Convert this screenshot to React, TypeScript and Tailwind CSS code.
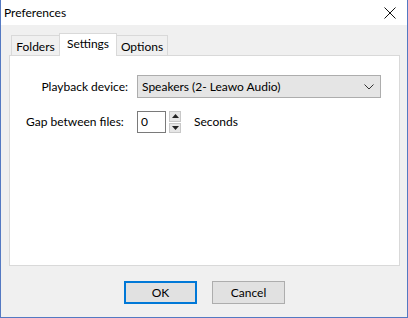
const font = { fontFamily: 'Lato, "Noto Sans", sans-serif' }

function Tab({ label, width, active }: { label: string; width: string; active?: boolean }) {
    if (active) {
        return (
            <div className={`relative z-10 -mb-px h-[23px] border border-b-0 border-[#d9d9d9] bg-white text-center leading-[20px] ${width}`}>
                {label}
            </div>
        )
    }
    return (
        <div className={`h-[20px] border border-b-0 border-[#d9d9d9] bg-[#f0f0f0] pt-px text-center leading-[19px] ${width}`}>
            {label}
        </div>
    )
}

function Spinner() {
    return (
        <div className="ml-[3px] flex h-[22px] w-[12px] flex-col gap-px">
            <div className="flex h-[11px] items-center justify-center border border-[#c8c8c8] bg-[#e6e6e6]">
                <svg width="7" height="4" viewBox="0 0 7 4"><path d="M3.5 0 L7 4 L0 4 Z" fill="#222" /></svg>
            </div>
            <div className="flex h-[11px] items-center justify-center border border-[#c8c8c8] bg-[#e6e6e6]">
                <svg width="7" height="4" viewBox="0 0 7 4"><path d="M0 0 L7 0 L3.5 4 Z" fill="#222" /></svg>
            </div>
        </div>
    )
}

export default function App() {
    return (
        <div
            className="flex h-[318px] w-[408px] flex-col border-x border-b border-[#5479c2] bg-[#f0f0f0] text-[12px] text-black"
            style={font}
        >
            <div className="flex h-[25px] shrink-0 items-center justify-between bg-white pl-[3px] pr-[11px]">
                <span className="text-[12px]">Preferences</span>
                <svg width="12" height="12" viewBox="0 0 12 12">
                    <path d="M0.5 0.5 L11.5 11.5 M11.5 0.5 L0.5 11.5" stroke="#111" strokeWidth="1" />
                </svg>
            </div>

            <div className="ml-[8px] mr-[7px] mt-[8px] flex flex-col">
                <div className="flex items-end pl-[2px]">
                    <Tab label="Folders" width="w-[49px]" />
                    <div className="-ml-px">
                        <Tab label="Settings" width="w-[58px]" active />
                    </div>
                    <div className="-ml-px">
                        <Tab label="Options" width="w-[52px]" />
                    </div>
                </div>
                <div className="h-[211px] border border-[#d9d9d9] bg-white">
                    <div className="mt-[19px] flex items-center">
                        <span className="w-[127px] pr-[9px] text-right">Playback device:</span>
                        <div className="flex h-[23px] w-[244px] items-center justify-between border border-[#adadad] bg-[#e5e5e5] pl-[4px] pr-[6px]">
                            <span>Speakers (2- Leawo Audio)</span>
                            <svg width="10" height="6" viewBox="0 0 10 6">
                                <path d="M0.5 0.5 L5 5 L9.5 0.5" stroke="#333" strokeWidth="1" fill="none" />
                            </svg>
                        </div>
                    </div>
                    <div className="mt-[13px] flex items-center">
                        <span className="w-[127px] pl-[16px]">Gap between files:</span>
                        <div className="flex h-[22px] w-[29px] items-center border border-[#7a7a7a] bg-white pl-[3px]">0</div>
                        <Spinner />
                        <span className="ml-[13px]">Seconds</span>
                    </div>
                </div>
            </div>

            <div className="mt-[15px] flex gap-[15px] pl-[123px]">
                <button className="h-[23px] w-[73px] border-2 border-[#0078d7] bg-[#e1e1e1]">OK</button>
                <button className="h-[23px] w-[73px] border border-[#adadad] bg-[#e1e1e1]">Cancel</button>
            </div>
        </div>
    )
}
